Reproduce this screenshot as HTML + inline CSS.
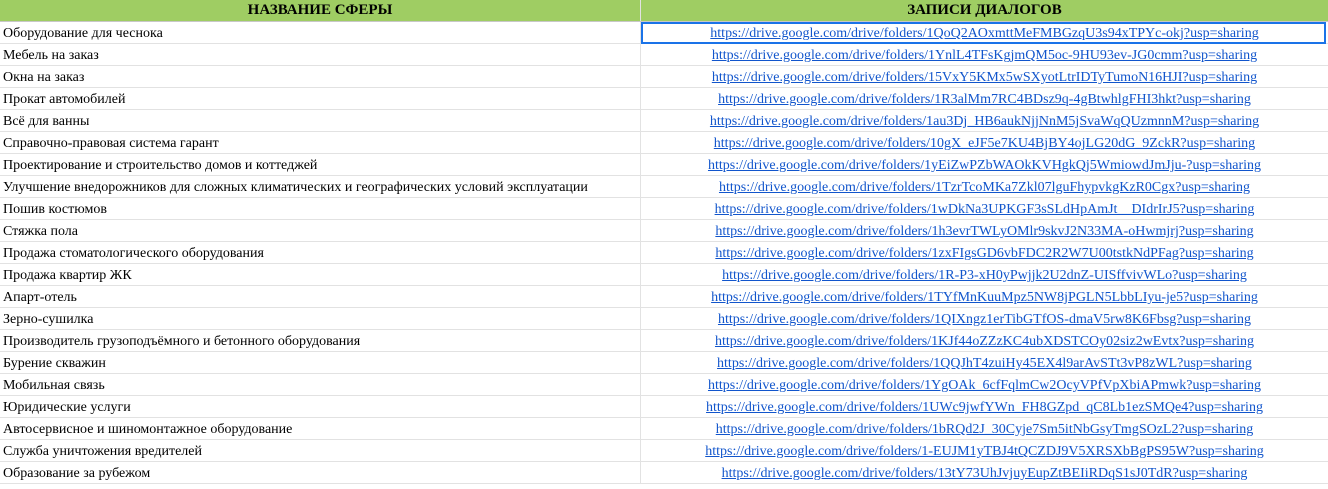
<!DOCTYPE html>
<html><head><meta charset="utf-8"><style>
body{margin:0;background:#fff;width:1328px;height:489px;overflow:hidden;font-family:"Liberation Serif","Noto Serif CJK SC",serif;font-size:14px;color:#000}
table{border-collapse:collapse;table-layout:fixed;width:1328px;position:absolute;left:0;top:0}
td{height:21px;max-height:21px;padding:0;border-bottom:1px solid #e2e2e2;white-space:nowrap;overflow:hidden;line-height:21px;box-sizing:content-box}
td div{height:21px;line-height:23px;overflow:hidden}
td.a{width:637px;padding-left:3px;border-right:1px solid #e2e2e2}
td.b{text-align:center}
td.b span{color:#1155cc;text-decoration:underline}
tr.h td{background:#9fcd63;font-weight:bold;text-align:center;font-size:15px;border-bottom:1px solid #c8c8c8}
.sel{position:absolute;left:641px;top:22px;width:681px;height:18px;border:2px solid #1a73e8}
</style></head><body>
<table>
<tr class="h"><td class="a" style="padding-left:0;width:640px"><div style="line-height:21px">НАЗВАНИЕ СФЕРЫ</div></td><td><div style="line-height:21px">ЗАПИСИ ДИАЛОГОВ</div></td></tr>
<tr><td class="a"><div>Оборудование для чеснока</div></td><td class="b"><div><span>https://drive.google.com/drive/folders/1QoQ2AOxmttMeFMBGzqU3s94xTPYc-okj?usp=sharing</span></div></td></tr>
<tr><td class="a"><div>Мебель на заказ</div></td><td class="b"><div><span>https://drive.google.com/drive/folders/1YnlL4TFsKgjmQM5oc-9HU93ev-JG0cmm?usp=sharing</span></div></td></tr>
<tr><td class="a"><div>Окна на заказ</div></td><td class="b"><div><span>https://drive.google.com/drive/folders/15VxY5KMx5wSXyotLtrIDTyTumoN16HJI?usp=sharing</span></div></td></tr>
<tr><td class="a"><div>Прокат автомобилей</div></td><td class="b"><div><span>https://drive.google.com/drive/folders/1R3alMm7RC4BDsz9q-4gBtwhlgFHI3hkt?usp=sharing</span></div></td></tr>
<tr><td class="a"><div>Всё для ванны</div></td><td class="b"><div><span>https://drive.google.com/drive/folders/1au3Dj_HB6aukNjjNnM5jSvaWqQUzmnnM?usp=sharing</span></div></td></tr>
<tr><td class="a"><div>Справочно-правовая система гарант</div></td><td class="b"><div><span>https://drive.google.com/drive/folders/10gX_eJF5e7KU4BjBY4ojLG20dG_9ZckR?usp=sharing</span></div></td></tr>
<tr><td class="a"><div>Проектирование и строительство домов и коттеджей</div></td><td class="b"><div><span>https://drive.google.com/drive/folders/1yEiZwPZbWAOkKVHgkQj5WmiowdJmJju-?usp=sharing</span></div></td></tr>
<tr><td class="a"><div>Улучшение внедорожников для сложных климатических и географических условий эксплуатации</div></td><td class="b"><div><span>https://drive.google.com/drive/folders/1TzrTcoMKa7Zkl07lguFhypvkgKzR0Cgx?usp=sharing</span></div></td></tr>
<tr><td class="a"><div>Пошив костюмов</div></td><td class="b"><div><span>https://drive.google.com/drive/folders/1wDkNa3UPKGF3sSLdHpAmJt__DIdrIrJ5?usp=sharing</span></div></td></tr>
<tr><td class="a"><div>Стяжка пола</div></td><td class="b"><div><span>https://drive.google.com/drive/folders/1h3evrTWLyOMlr9skvJ2N33MA-oHwmjrj?usp=sharing</span></div></td></tr>
<tr><td class="a"><div>Продажа стоматологического оборудования</div></td><td class="b"><div><span>https://drive.google.com/drive/folders/1zxFIgsGD6vbFDC2R2W7U00tstkNdPFag?usp=sharing</span></div></td></tr>
<tr><td class="a"><div>Продажа квартир ЖК</div></td><td class="b"><div><span>https://drive.google.com/drive/folders/1R-P3-xH0yPwjjk2U2dnZ-UISffvivWLo?usp=sharing</span></div></td></tr>
<tr><td class="a"><div>Апарт-отель</div></td><td class="b"><div><span>https://drive.google.com/drive/folders/1TYfMnKuuMpz5NW8jPGLN5LbbLIyu-je5?usp=sharing</span></div></td></tr>
<tr><td class="a"><div>Зерно-сушилка</div></td><td class="b"><div><span>https://drive.google.com/drive/folders/1QIXngz1erTibGTfOS-dmaV5rw8K6Fbsg?usp=sharing</span></div></td></tr>
<tr><td class="a"><div>Производитель грузоподъёмного и бетонного оборудования</div></td><td class="b"><div><span>https://drive.google.com/drive/folders/1KJf44oZZzKC4ubXDSTCOy02siz2wEvtx?usp=sharing</span></div></td></tr>
<tr><td class="a"><div>Бурение скважин</div></td><td class="b"><div><span>https://drive.google.com/drive/folders/1QQJhT4zuiHy45EX4l9arAvSTt3vP8zWL?usp=sharing</span></div></td></tr>
<tr><td class="a"><div>Мобильная связь</div></td><td class="b"><div><span>https://drive.google.com/drive/folders/1YgOAk_6cfFqlmCw2OcyVPfVpXbiAPmwk?usp=sharing</span></div></td></tr>
<tr><td class="a"><div>Юридические услуги</div></td><td class="b"><div><span>https://drive.google.com/drive/folders/1UWc9jwfYWn_FH8GZpd_qC8Lb1ezSMQe4?usp=sharing</span></div></td></tr>
<tr><td class="a"><div>Автосервисное и шиномонтажное оборудование</div></td><td class="b"><div><span>https://drive.google.com/drive/folders/1bRQd2J_30Cyje7Sm5itNbGsyTmgSOzL2?usp=sharing</span></div></td></tr>
<tr><td class="a"><div>Служба уничтожения вредителей</div></td><td class="b"><div><span>https://drive.google.com/drive/folders/1-EUJM1yTBJ4tQCZDJ9V5XRSXbBgPS95W?usp=sharing</span></div></td></tr>
<tr><td class="a"><div>Образование за рубежом</div></td><td class="b"><div><span>https://drive.google.com/drive/folders/13tY73UhJvjuyEupZtBEIiRDqS1sJ0TdR?usp=sharing</span></div></td></tr>
</table>
<div class="sel"></div>
</body></html>
